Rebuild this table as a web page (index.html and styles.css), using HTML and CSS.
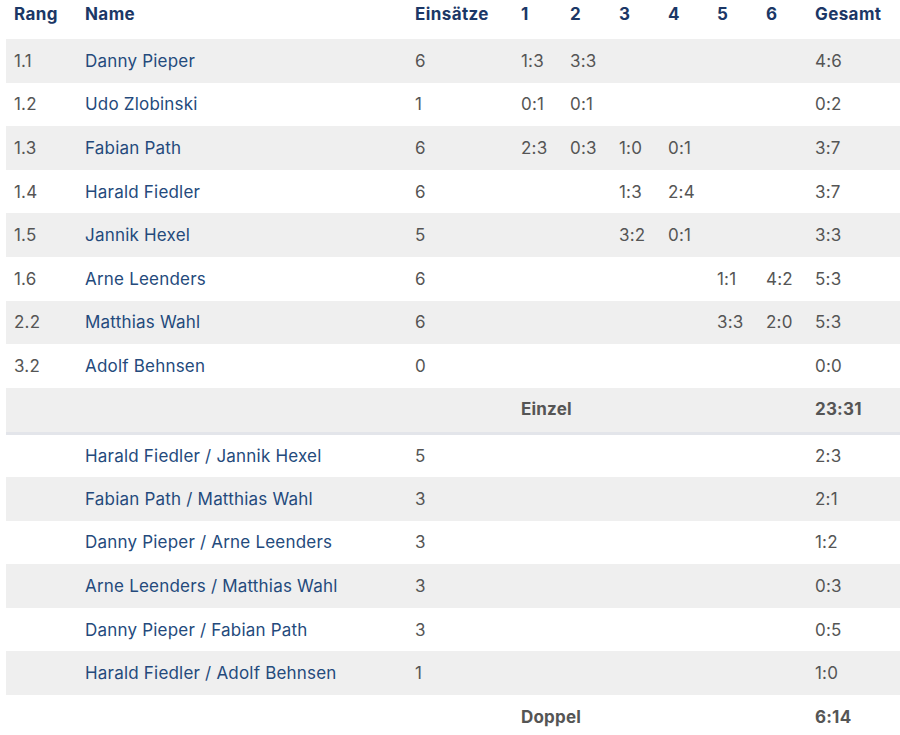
FILE: index.html
```html
<!DOCTYPE html>
<html lang="de">
<head>
<meta charset="utf-8">
<title>Bilanz</title>
<link rel="stylesheet" href="styles.css">
</head>
<body>
<table class="bilanz">
  <colgroup>
    <col class="c-rang"><col class="c-name"><col class="c-eins">
    <col class="c-r"><col class="c-r"><col class="c-r"><col class="c-r"><col class="c-r"><col class="c-r">
    <col class="c-ges">
  </colgroup>
  <thead>
    <tr><th>Rang</th><th>Name</th><th>Einsätze</th><th>1</th><th>2</th><th>3</th><th>4</th><th>5</th><th>6</th><th>Gesamt</th></tr>
  </thead>
  <tbody>
    <tr><td>1.1</td><td class="name">Danny Pieper</td><td>6</td><td>1:3</td><td>3:3</td><td></td><td></td><td></td><td></td><td>4:6</td></tr>
    <tr><td>1.2</td><td class="name">Udo Zlobinski</td><td>1</td><td>0:1</td><td>0:1</td><td></td><td></td><td></td><td></td><td>0:2</td></tr>
    <tr><td>1.3</td><td class="name">Fabian Path</td><td>6</td><td>2:3</td><td>0:3</td><td>1:0</td><td>0:1</td><td></td><td></td><td>3:7</td></tr>
    <tr><td>1.4</td><td class="name">Harald Fiedler</td><td>6</td><td></td><td></td><td>1:3</td><td>2:4</td><td></td><td></td><td>3:7</td></tr>
    <tr><td>1.5</td><td class="name">Jannik Hexel</td><td>5</td><td></td><td></td><td>3:2</td><td>0:1</td><td></td><td></td><td>3:3</td></tr>
    <tr><td>1.6</td><td class="name">Arne Leenders</td><td>6</td><td></td><td></td><td></td><td></td><td>1:1</td><td>4:2</td><td>5:3</td></tr>
    <tr><td>2.2</td><td class="name">Matthias Wahl</td><td>6</td><td></td><td></td><td></td><td></td><td>3:3</td><td>2:0</td><td>5:3</td></tr>
    <tr><td>3.2</td><td class="name">Adolf Behnsen</td><td>0</td><td></td><td></td><td></td><td></td><td></td><td></td><td>0:0</td></tr>
    <tr class="sum sep"><td></td><td></td><td></td><td colspan="6">Einzel</td><td>23:31</td></tr>
    <tr><td></td><td class="name">Harald Fiedler / Jannik Hexel</td><td>5</td><td></td><td></td><td></td><td></td><td></td><td></td><td>2:3</td></tr>
    <tr><td></td><td class="name">Fabian Path / Matthias Wahl</td><td>3</td><td></td><td></td><td></td><td></td><td></td><td></td><td>2:1</td></tr>
    <tr><td></td><td class="name">Danny Pieper / Arne Leenders</td><td>3</td><td></td><td></td><td></td><td></td><td></td><td></td><td>1:2</td></tr>
    <tr><td></td><td class="name">Arne Leenders / Matthias Wahl</td><td>3</td><td></td><td></td><td></td><td></td><td></td><td></td><td>0:3</td></tr>
    <tr><td></td><td class="name">Danny Pieper / Fabian Path</td><td>3</td><td></td><td></td><td></td><td></td><td></td><td></td><td>0:5</td></tr>
    <tr><td></td><td class="name">Harald Fiedler / Adolf Behnsen</td><td>1</td><td></td><td></td><td></td><td></td><td></td><td></td><td>1:0</td></tr>
    <tr class="sum"><td></td><td></td><td></td><td colspan="6">Doppel</td><td>6:14</td></tr>
  </tbody>
</table>
</body>
</html>
```

FILE: styles.css
```css
html, body {
  margin: 0;
  padding: 0;
  background: #ffffff;
}

body {
  padding: 0 0 0 6px;
  font-family: Inter, "Noto Sans", "Liberation Sans", sans-serif;
  font-size: 17px;
  letter-spacing: 0.2px;
  color: #555555;
}

.bilanz {
  width: 894px;
  border-collapse: collapse;
  table-layout: fixed;
}

.c-rang { width: 71px; }
.c-name { width: 330px; }
.c-eins { width: 106px; }
.c-r { width: 49px; }
.c-ges { width: 94px; }

.bilanz th {
  text-align: left;
  font-weight: 700;
  letter-spacing: 0.4px;
  color: #1b3766;
  height: 39px;
  padding: 0 0 12px 8px;
  vertical-align: middle;
  box-sizing: border-box;
  white-space: nowrap;
}

.bilanz td {
  height: 43.6px;
  padding: 0 0 0 8px;
  vertical-align: middle;
  white-space: nowrap;
  box-sizing: border-box;
}

.bilanz tbody tr:nth-child(odd) {
  background: #efefef;
}

.bilanz td.name {
  color: #244a7c;
}

.bilanz tr.sum td {
  font-weight: 700;
  color: #555555;
}

.bilanz tr.sep td {
  height: 45.6px;
  padding-bottom: 2px;
  border-bottom: 3px solid #e3e5ea;
}
```
